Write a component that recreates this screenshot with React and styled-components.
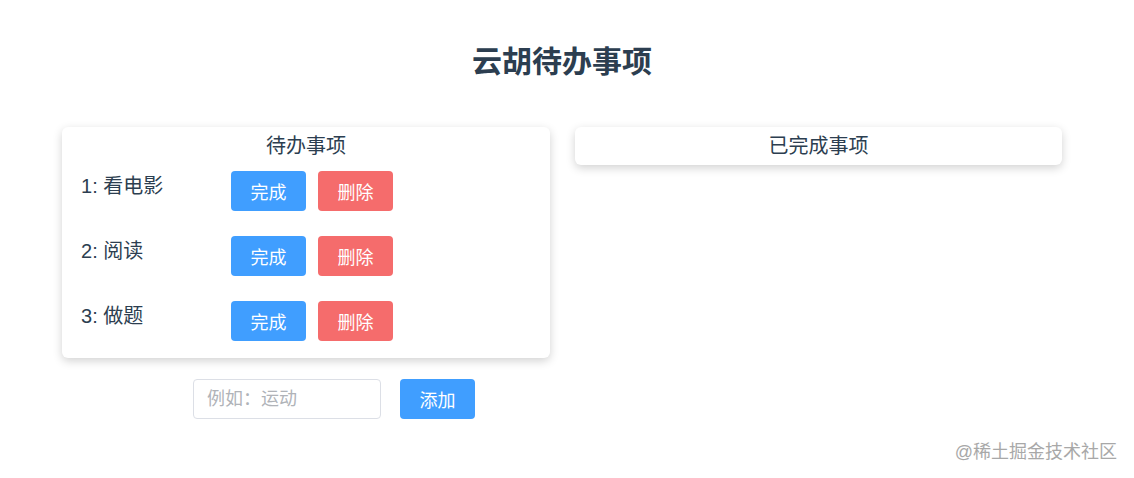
import styled, { createGlobalStyle } from "styled-components";

const GlobalStyle = createGlobalStyle`
  html, body {
    margin: 0;
    padding: 0;
    background: #fff;
  }
  body {
    font-family: "Liberation Sans", "Noto Sans CJK SC", sans-serif;
    color: #2c3e50;
  }
`;

const Page = styled.div`
  position: relative;
  width: 1134px;
  height: 478px;
  padding-top: 42px;
  box-sizing: border-box;
`;

const Title = styled.h1`
  margin: 0;
  padding-right: 10px;
  font-size: 30px;
  line-height: 40px;
  font-weight: 700;
  text-align: center;
  color: #2c3e50;
`;

const Board = styled.div`
  display: flex;
  align-items: flex-start;
  gap: 25px;
  padding-left: 62px;
  margin-top: 45px;
`;

const Column = styled.div`
  display: flex;
  flex-direction: column;
  width: ${(p) => p.width}px;
`;

const Card = styled.div`
  background: #fff;
  border-radius: 6px;
  box-shadow: 0 3px 10px rgba(0, 0, 0, 0.18);
  padding: 7px 0 ${(p) => (p.empty ? 6 : 17)}px;
`;

const CardTitle = styled.div`
  font-size: 20px;
  line-height: 25px;
  text-align: center;
  color: #2c3e50;
`;

const List = styled.div`
  display: flex;
  flex-direction: column;
  gap: 25px;
  margin-top: 12px;
  padding-left: 19px;
`;

const Row = styled.div`
  display: flex;
  align-items: flex-start;
`;

const Label = styled.span`
  width: 150px;
  font-size: 20px;
  line-height: 30px;
  color: #2c3e50;
`;

const Button = styled.button`
  width: 75px;
  height: 40px;
  margin-right: 12px;
  border: none;
  border-radius: 4px;
  background: ${(p) => (p.danger ? "#f56c6c" : "#409eff")};
  color: #fff;
  font-family: "Liberation Sans", "Noto Sans CJK SC", sans-serif;
  font-size: 18px;
  cursor: pointer;
  padding: 0;
`;

const Form = styled.div`
  display: flex;
  align-items: center;
  gap: 19px;
  margin-top: 21px;
  padding-left: 131px;
`;

const Input = styled.input`
  width: 188px;
  height: 40px;
  box-sizing: border-box;
  border: 1px solid #dcdfe6;
  border-radius: 4px;
  padding: 0 13px;
  font-family: "Liberation Sans", "Noto Sans CJK SC", sans-serif;
  font-size: 18px;
  color: #606266;
  outline: none;
  &::placeholder {
    color: #b0b3b8;
  }
`;

const Watermark = styled.div`
  position: absolute;
  right: 17px;
  top: 440px;
  font-size: 18px;
  line-height: 24px;
  color: #a8a8a8;
`;

const todos = ["看电影", "阅读", "做题"];

export default function App() {
  return (
    <Page>
      <GlobalStyle />
      <Title>云胡待办事项</Title>
      <Board>
        <Column width={488}>
          <Card>
            <CardTitle>待办事项</CardTitle>
            <List>
              {todos.map((t, i) => (
                <Row key={t}>
                  <Label>
                    {i + 1}: {t}
                  </Label>
                  <Button>完成</Button>
                  <Button danger>删除</Button>
                </Row>
              ))}
            </List>
          </Card>
          <Form>
            <Input placeholder="例如：运动" />
            <Button>添加</Button>
          </Form>
        </Column>
        <Column width={487}>
          <Card empty>
            <CardTitle>已完成事项</CardTitle>
          </Card>
        </Column>
      </Board>
      <Watermark>@稀土掘金技术社区</Watermark>
    </Page>
  );
}
